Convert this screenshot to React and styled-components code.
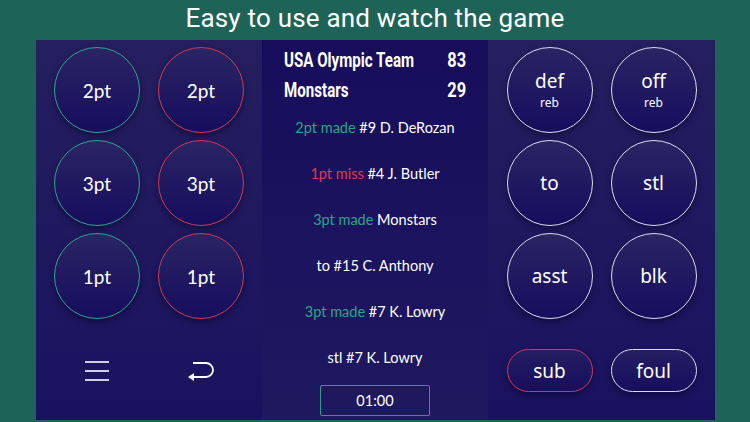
import React from "react";
import styled, { createGlobalStyle } from "styled-components";

const Global = createGlobalStyle`
  html, body { margin: 0; padding: 0; }
  body {
    width: 750px; height: 422px; overflow: hidden;
    background: #1e6358;
    font-family: Lato, "Noto Sans", sans-serif;
    color: #fff;
  }
`;

const Page = styled.div`
  width: 750px;
  height: 422px;
  display: flex;
  flex-direction: column;
`;

const Title = styled.h1`
  margin: 0;
  height: 40px;
  display: flex;
  align-items: center;
  justify-content: center;
  font-family: Roboto, "Noto Sans", sans-serif;
  font-weight: 400;
  font-size: 26px;
  letter-spacing: 0.2px;
  color: #fff;
  padding-bottom: 4px;
  box-sizing: border-box;
`;

const Board = styled.div`
  margin: 0 35px 0 36px;
  height: 380px;
  display: grid;
  grid-template-columns: 226px 226px 227px;
`;

const Side = styled.div`
  background: linear-gradient(#251f5e, #1a1260);
  display: flex;
  flex-direction: column;
  align-items: center;
  padding-top: 7px;
  box-sizing: border-box;
`;

const Center = styled.div`
  background: linear-gradient(#170d5b, #1f1960);
  display: flex;
  flex-direction: column;
  align-items: center;
  box-sizing: border-box;
  padding-top: 5px;
`;

const Row = styled.div`
  display: flex;
  gap: 18px;
  margin-bottom: 7px;
  margin-top: ${(p) => p.$mt ?? 0}px;
`;

const colors = { green: "#2ba68b", red: "#d2394c", white: "#dcdbe8" };

const Circle = styled.div`
  width: 86px;
  height: 86px;
  box-sizing: border-box;
  border-radius: 50%;
  border: 1.3px solid ${(p) => colors[p.$c]};
  background: linear-gradient(#2a2563, #160d5e);
  box-shadow: 0 3px 6px rgba(5, 0, 30, 0.45);
  display: flex;
  flex-direction: column;
  align-items: center;
  justify-content: center;
  font-family: ${(p) => (p.$alt ? `"Noto Sans", "Open Sans", sans-serif` : `Lato, sans-serif`)};
  font-size: 19px;
  line-height: 1;
  color: #fff;
`;

const Sub = styled.span`
  font-size: 12px;
  margin-top: 6px;
`;

const Pill = styled.div`
  width: 86px;
  height: 43px;
  box-sizing: border-box;
  border-radius: 22px;
  border: 1.3px solid ${(p) => colors[p.$c]};
  background: linear-gradient(#241e62, #170e5e);
  box-shadow: 0 3px 6px rgba(5, 0, 30, 0.45);
  display: flex;
  align-items: center;
  justify-content: center;
  font-family: "Noto Sans", "Open Sans", sans-serif;
  font-size: 19px;
  color: #fff;
`;

const IconCell = styled.div`
  width: 86px;
  height: 43px;
  display: flex;
  align-items: center;
  justify-content: center;
`;

const Teams = styled.div`
  width: 182px;
  display: flex;
  flex-direction: column;
  font-family: Roboto, "Liberation Sans", sans-serif;
  font-weight: 700;
  font-size: 21px;
`;

const TeamRow = styled.div`
  display: flex;
  height: 30px;
  line-height: 30px;
  white-space: nowrap;
`;

const Name = styled.span`
  flex: 1 1 0;
  min-width: 0;
  display: block;
  transform: scaleX(0.72);
  transform-origin: left center;
`;

const Score = styled.span`
  flex: none;
  display: block;
  transform: scaleX(0.78);
  transform-origin: right center;
`;

const Play = styled.div`
  height: 46px;
  line-height: 46px;
  font-size: 14.5px;
  color: #fff;
  text-align: center;
  white-space: nowrap;
`;

const Tag = styled.span`
  color: ${(p) => (p.$miss ? "#e0394a" : "#2aa585")};
`;

const Timer = styled.div`
  margin-top: 4px;
  width: 110px;
  height: 31px;
  box-sizing: border-box;
  border: 1px solid #2a9c82;
  border-radius: 2px;
  display: flex;
  align-items: center;
  justify-content: center;
  font-size: 14.5px;
`;

const Menu = () => (
  <svg width="26" height="22" viewBox="0 0 26 22" fill="none" stroke="#fff" strokeWidth="1.6">
    <line x1="1" y1="2" x2="25" y2="2" />
    <line x1="1" y1="11" x2="25" y2="11" />
    <line x1="1" y1="20" x2="25" y2="20" />
  </svg>
);

const Back = () => (
  <svg width="28" height="22" viewBox="0 0 28 22" fill="none" stroke="#fff" strokeWidth="1.8">
    <path d="M6 3 H19 A7 7 0 0 1 19 17 H5" />
    <path d="M1 17 L7 13 L7 21 Z" fill="#fff" stroke="none" />
  </svg>
);

const plays = [
  ["2pt made", " #9 D. DeRozan", false],
  ["1pt miss", " #4 J. Butler", true],
  ["3pt made", " Monstars", false],
  [null, "to #15 C. Anthony"],
  ["3pt made", " #7 K. Lowry", false],
  [null, "stl #7 K. Lowry"],
];

export default function App() {
  return (
    <Page>
      <Global />
      <Title>Easy to use and watch the game</Title>
      <Board>
        <Side>
          {["2pt", "3pt", "1pt"].map((t) => (
            <Row key={t}>
              <Circle $c="green">{t}</Circle>
              <Circle $c="red">{t}</Circle>
            </Row>
          ))}
          <Row $mt={23}>
            <IconCell><Menu /></IconCell>
            <IconCell><Back /></IconCell>
          </Row>
        </Side>
        <Center>
          <Teams>
            <TeamRow><Name>USA Olympic Team</Name><Score>83</Score></TeamRow>
            <TeamRow><Name>Monstars</Name><Score>29</Score></TeamRow>
          </Teams>
          {plays.map(([tag, rest, miss], i) => (
            <Play key={i}>
              {tag && <Tag $miss={miss}>{tag}</Tag>}
              {rest}
            </Play>
          ))}
          <Timer>01:00</Timer>
        </Center>
        <Side>
          <Row>
            <Circle $c="white" $alt>def<Sub>reb</Sub></Circle>
            <Circle $c="white" $alt>off<Sub>reb</Sub></Circle>
          </Row>
          <Row>
            <Circle $c="white" $alt>to</Circle>
            <Circle $c="white" $alt>stl</Circle>
          </Row>
          <Row>
            <Circle $c="white" $alt>asst</Circle>
            <Circle $c="white" $alt>blk</Circle>
          </Row>
          <Row $mt={23}>
            <Pill $c="red">sub</Pill>
            <Pill $c="white">foul</Pill>
          </Row>
        </Side>
      </Board>
    </Page>
  );
}
